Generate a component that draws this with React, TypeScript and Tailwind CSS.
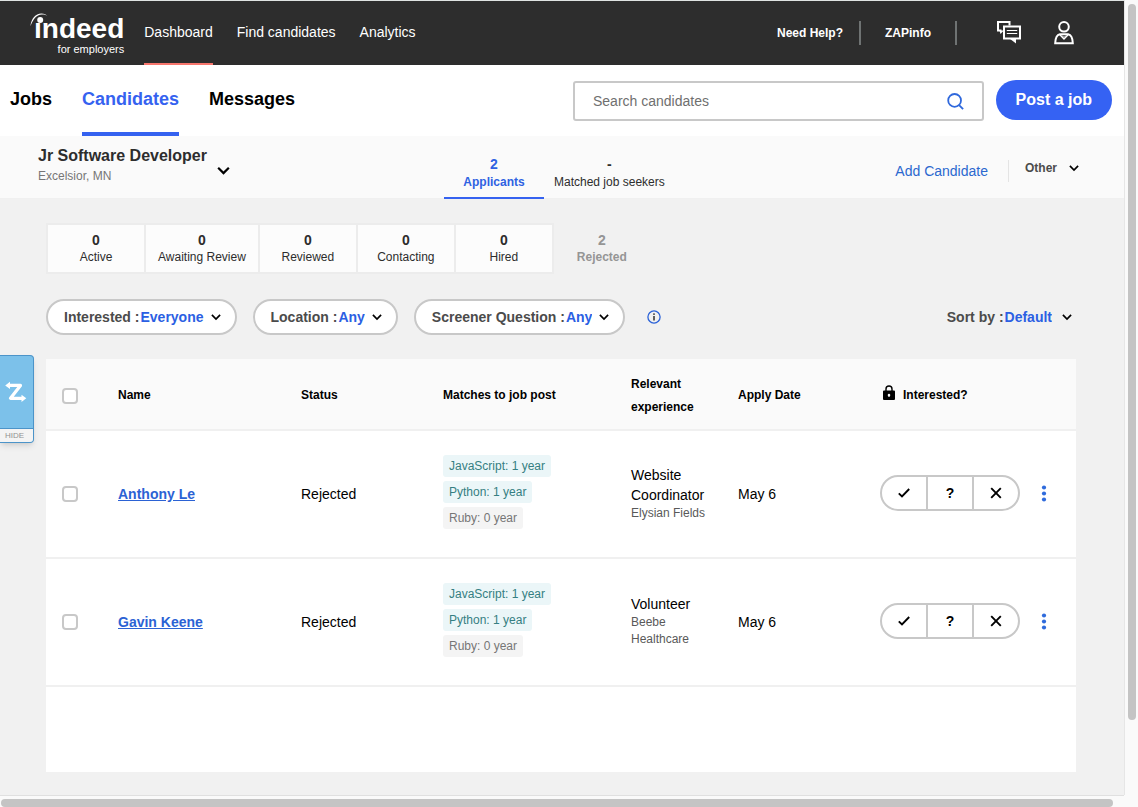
import { useState } from "react";
import clsx from "clsx";

const navLinks = ["Dashboard", "Find candidates", "Analytics"];
const tabs = ["Jobs", "Candidates", "Messages"];

const stages = [
  { count: 0, label: "Active" },
  { count: 0, label: "Awaiting Review" },
  { count: 0, label: "Reviewed" },
  { count: 0, label: "Contacting" },
  { count: 0, label: "Hired" },
];

const filters = [
  { id: "interested", label: "Interested :", options: ["Everyone"] },
  { id: "location", label: "Location :", options: ["Any"] },
  { id: "screener", label: "Screener Question :", options: ["Any"] },
];

const skills = [
  { label: "JavaScript: 1 year", match: true },
  { label: "Python: 1 year", match: true },
  { label: "Ruby: 0 year", match: false },
];

const candidates = [
  { name: "Anthony Le", status: "Rejected", role: "Website Coordinator", company: "Elysian Fields", date: "May 6" },
  { name: "Gavin Keene", status: "Rejected", role: "Volunteer", company: "Beebe Healthcare", date: "May 6" },
];

function Chevron({ className = "h-[10px] w-[10px]" }: { className?: string }) {
  return (
    <svg viewBox="0 0 10 10" className={clsx("shrink-0 text-black", className)} fill="none" stroke="currentColor" strokeWidth="1.7" aria-hidden="true">
      <path d="M.9 2.9 5 7l4.100-4.100" />
    </svg>
  );
}

function Logo() {
  return (
    <a href="#home" aria-label="indeed for employers" className="relative flex flex-col items-end text-white">
      <svg viewBox="0 0 20 14" className="absolute -left-1 top-0 h-[14px] w-[20px]" fill="currentColor" aria-hidden="true">
        <path d="M.4 13.200C1.200 5.500 5.600.4 11.400.4c2.800 0 4.700.8 6 2.600-1.700-1.200-3.500-1.700-5.600-1.500C6.400 1.900 3.200 6.200.4 13.200Z" />
        <circle cx="10.200" cy="7" r="3" />
      </svg>
      <span className="pt-[2px] text-[28px] font-bold leading-[28px]">ındeed</span>
      <span className="text-[11px] leading-[12px]">for employers</span>
    </a>
  );
}

type DropdownProps = { id: string; label: string; options: string[]; wide?: boolean };

function Dropdown({ id, label, options, wide }: DropdownProps) {
  return (
    <div className="flex items-center text-sm font-bold">
      <label htmlFor={id} className="mr-px text-[#4b4b4b]">{label}</label>
      <select id={id} className="field-sizing-content appearance-none bg-transparent text-[#2b5fe3] outline-none">
        {options.map((o) => (
          <option key={o}>{o}</option>
        ))}
      </select>
      <Chevron className={clsx("h-[10px] w-[10px]", wide ? "ml-[10px]" : "ml-[7px]")} />
    </div>
  );
}

function Checkbox({ label }: { label: string }) {
  return (
    <input
      type="checkbox"
      aria-label={label}
      className="block h-4 w-4 appearance-none rounded-[4px] border-2 border-[#c8c8c8] bg-white checked:bg-[#2557d6]"
    />
  );
}

function TopBar() {
  return (
    <header className="flex h-[65px] shrink-0 items-stretch border-t border-[#dfe3e2] bg-[#2d2d2d] pl-[34px] pr-[49px] text-white">
      <div className="mr-5 pt-3">
        <Logo />
      </div>
      <nav className="flex gap-6">
        {navLinks.map((link, i) => (
          <a
            key={link}
            href="#nav"
            className={clsx("flex items-center border-b-2 text-sm", i === 0 ? "border-[#f7766d]" : "border-transparent")}
          >
            {link}
          </a>
        ))}
      </nav>
      <div className="ml-auto flex items-center text-xs font-bold">
        <a href="#help" className="pr-4">Need Help?</a>
        <div className="h-6 w-[2px] bg-[#6f7373]" />
        <a href="#zapinfo" className="px-6">ZAPinfo</a>
        <div className="h-6 w-[2px] bg-[#6f7373]" />
        <button type="button" aria-label="Messages" className="ml-10">
          <svg viewBox="0 0 24 24" className="h-6 w-6" fill="none" stroke="currentColor" strokeWidth="2">
            <path d="M4.500 9.500H1V1h11.500v3.500" />
            <path d="M7 5.500h16v12H7z" />
            <path d="M12.500 17.500h6.500v5z" fill="currentColor" stroke="none" />
            <path d="M2.500 9.500h4.300L3.500 13z" fill="currentColor" stroke="none" />
            <path d="M9.800 9.500h10.400M9.800 12.500h10.400" strokeWidth="1.200" />
          </svg>
        </button>
        <button type="button" aria-label="Account" className="ml-8">
          <svg viewBox="0 0 22 24" className="h-6 w-[22px]" fill="none" stroke="currentColor" strokeWidth="2">
            <circle cx="11" cy="5.800" r="4.800" />
            <path d="M2.200 22.200c.2-4.400 1.600-8.400 4.600-8.900h8.400c3 .5 4.400 4.500 4.600 8.900z" />
            <path d="m6.800 13.700 4.200 4.300 4.200-4.300" strokeWidth="1.300" />
            <path d="m9 14.500 2 2 2-2" strokeWidth="1" />
          </svg>
        </button>
      </div>
    </header>
  );
}

function SubNav() {
  return (
    <div className="flex h-[71px] shrink-0 bg-white pl-[10px] pr-3">
      <nav className="flex gap-[30px]">
        {tabs.map((tab) => (
          <a
            key={tab}
            href="#tab"
            className={clsx(
              "border-b-4 pt-[22px] text-lg font-bold leading-6",
              tab === "Candidates" ? "border-[#3562f0] text-[#3562f0]" : "border-transparent text-black"
            )}
          >
            {tab}
          </a>
        ))}
      </nav>
      <div className="ml-auto flex w-[539px] items-start gap-3 pt-[15px]">
        <form className="mt-px flex h-10 grow items-center rounded-[3px] border-2 border-[#c8c8c8] px-[18px]">
          <input
            type="search"
            aria-label="Search candidates"
            placeholder="Search candidates"
            className="min-w-0 grow bg-transparent text-sm outline-none placeholder:text-[#6f6f6f]"
          />
          <button type="button" aria-label="Search" className="text-[#2f68dc]">
            <svg viewBox="0 0 17 17" className="h-[17px] w-[17px]" fill="none" stroke="currentColor" strokeWidth="1.800">
              <circle cx="7.600" cy="7.400" r="6.400" />
              <path d="m12.100 12.100 4 4" />
            </svg>
          </button>
        </form>
        <button type="button" className="h-10 shrink-0 rounded-full bg-[#3562f3] px-5 text-base font-bold text-white">
          Post a job
        </button>
      </div>
    </div>
  );
}

function JobBar() {
  return (
    <div className="flex h-[63px] shrink-0 border-b border-[#f0f0f0] bg-[#fafafa] pl-[38px] pr-[45px]">
      <button type="button" className="flex w-[406px] items-start gap-[10px] pt-[9px] text-left">
        <span>
          <span className="block text-base font-bold leading-[22px] text-[#2d2d2d]">Jr Software Developer</span>
          <span className="block text-xs leading-[18px] text-[#767676]">Excelsior, MN</span>
        </span>
        <Chevron className="mt-[19px] h-[13px] w-[13px]" />
      </button>
      <div className="-mb-px flex">
        <button type="button" className="min-w-[100px] border-b-2 border-[#3562f0] pt-3 font-bold text-[#2f62e2]">
          <span className="block text-sm leading-[18px]">2</span>
          <span className="block text-xs leading-[18px]">Applicants</span>
        </button>
        <button type="button" className="border-b-2 border-transparent px-[10px] pt-3 text-[#2d2d2d]">
          <span className="block text-sm font-bold leading-[18px]">-</span>
          <span className="block text-xs leading-[18px]">Matched job seekers</span>
        </button>
      </div>
      <div className="ml-auto flex items-center">
        <a href="#add" className="pt-2 text-sm text-[#2b68cf]">Add Candidate</a>
        <div className="ml-5 mr-4 mt-2 h-[22px] w-px bg-[#e4e4e4]" />
        <button type="button" className="flex items-center gap-3 pt-px text-xs font-bold text-[#4b4b4b]">
          Other
          <Chevron />
        </button>
      </div>
    </div>
  );
}

function InterestButtons() {
  const cell = "flex w-[46px] shrink-0 items-center justify-center last:w-11";
  return (
    <div className="flex h-9 w-[140px] divide-x-2 divide-[#c8c8c8] rounded-full border-2 border-[#c8c8c8] bg-white text-black">
      <button type="button" aria-label="Yes" className={cell}>
        <svg viewBox="0 0 12 12" className="h-3 w-3" fill="none" stroke="currentColor" strokeWidth="1.900">
          <path d="m.8 6.300 3.200 3.200 7.200-7.500" />
        </svg>
      </button>
      <button type="button" aria-label="Maybe" className={clsx(cell, "text-sm font-bold")}>?</button>
      <button type="button" aria-label="No" className={cell}>
        <svg viewBox="0 0 12 12" className="h-3 w-3" fill="none" stroke="currentColor" strokeWidth="1.900">
          <path d="m1.200 1.200 9.600 9.600M10.800 1.200l-9.600 9.600" />
        </svg>
      </button>
    </div>
  );
}

function CandidateTable() {
  return (
    <div className="h-[413px] bg-white">
      <table className="w-full table-fixed text-left">
        <colgroup>
          <col className="w-[72px]" />
          <col />
          <col className="w-[142px]" />
          <col className="w-[188px]" />
          <col className="w-[107px]" />
          <col className="w-[142px]" />
          <col className="w-[196px]" />
        </colgroup>
        <thead>
          <tr className="h-[71px] border-b-2 border-[#f0f0f0] bg-[#fafafa] text-xs leading-[23px] text-black [&>th]:pt-[3px]">
            <th className="pl-4"><Checkbox label="Select all" /></th>
            <th>Name</th>
            <th>Status</th>
            <th>Matches to job post</th>
            <th className="pr-4">Relevant experience</th>
            <th>Apply Date</th>
            <th>
              <span className="flex items-center gap-2 pl-[3px]">
                <svg viewBox="0 0 12 15" className="mb-[7px] h-[15px] w-3" fill="none" aria-hidden="true">
                  <path d="M3 6V4a3 3 0 0 1 6 0v2" stroke="currentColor" strokeWidth="1.400" />
                  <path fill="currentColor" fillRule="evenodd" d="M1 5.500h10a1 1 0 0 1 1 1v7.500a1 1 0 0 1-1 1H1a1 1 0 0 1-1-1V6.500a1 1 0 0 1 1-1Zm5 3.200a1.400 1.400 0 0 0-.6 2.600V12h1.200v-.7A1.400 1.400 0 0 0 6 8.700Z" />
                </svg>
                Interested?
              </span>
            </th>
          </tr>
        </thead>
        <tbody>
          {candidates.map((c) => (
            <tr key={c.name} className="h-32 border-b-2 border-[#f0f0f0] text-sm text-black">
              <td className="pl-4"><Checkbox label={`Select ${c.name}`} /></td>
              <td>
                <a href="#candidate" className="font-bold text-[#2b62d4] underline">{c.name}</a>
              </td>
              <td>{c.status}</td>
              <td>
                <ul className="flex flex-col items-start text-xs leading-[22px]">
                  {skills.map((s) => (
                    <li
                      key={s.label}
                      className={clsx("mb-1 rounded-[3px] px-[6px]", s.match ? "bg-[#ebf6f8] text-[#357f82]" : "bg-[#f4f4f4] text-[#767676]")}
                    >
                      {s.label}
                    </li>
                  ))}
                </ul>
              </td>
              <td className="pb-[2px] pr-4">
                <div className="leading-5">{c.role}</div>
                <div className="text-xs leading-[17px] text-[#595959]">{c.company}</div>
              </td>
              <td>{c.date}</td>
              <td className="pb-[2px]">
                <div className="flex items-center gap-[21px]">
                  <InterestButtons />
                  <button type="button" aria-label="More actions" className="text-[#2f6bdc]">
                    <svg viewBox="0 0 6 17" className="h-[17px] w-[6px]" fill="currentColor">
                      <circle cx="3" cy="2.500" r="2.100" />
                      <circle cx="3" cy="8.500" r="2.100" />
                      <circle cx="3" cy="14.500" r="2.100" />
                    </svg>
                  </button>
                </div>
              </td>
            </tr>
          ))}
        </tbody>
      </table>
    </div>
  );
}

function SideWidget({ onHide }: { onHide: () => void }) {
  return (
    <aside className="absolute left-0 top-[355px] flex h-[88px] w-[34px] flex-col overflow-hidden rounded-r-[4px] border border-l-0 border-[#4c94c9] bg-[#7cc1ea] shadow-md">
      <button type="button" aria-label="Open ZAPinfo" className="flex grow items-center pl-[5px] text-white">
        <svg viewBox="0 0 22 22" className="h-[22px] w-[22px]" fill="none" stroke="currentColor" strokeWidth="3.200" strokeLinejoin="round">
          <path d="M4 4.400h11.500L5.500 17.300h12" />
          <path d="M5 .8v7.200L.2 4.400zM16.500 13.700v7.200l4.800-3.600z" fill="currentColor" stroke="none" />
        </svg>
      </button>
      <button type="button" onClick={onHide} className="h-[14px] border-t border-[#4c94c9] bg-[#f4f4f4] pr-1 text-[8px] leading-[12px] text-[#929292]">
        HIDE
      </button>
    </aside>
  );
}

export default function App() {
  const [widgetOpen, setWidgetOpen] = useState(true);

  return (
    <div className="relative grid h-screen grid-cols-[1fr_14px] grid-rows-[1fr_12px] bg-[#fafafa] font-['Liberation_Sans',Arial,sans-serif]">
      <div className="flex min-w-0 flex-col overflow-hidden bg-[#f1f1f1]">
        <TopBar />
        <SubNav />
        <JobBar />

        <main className="pl-[46px] pr-12 pt-6">
          <div className="flex items-start text-center">
            <div className="flex border-2 border-r-0 border-[#ececec]">
              {stages.map((s) => (
                <button key={s.label} type="button" className="h-[47px] min-w-[98px] border-r-2 border-[#ececec] bg-[#fcfcfc] px-3 text-[#2d2d2d]">
                  <span className="block text-sm font-bold leading-[17px]">{s.count}</span>
                  <span className="block text-xs leading-[17px]">{s.label}</span>
                </button>
              ))}
            </div>
            <button type="button" className="h-[51px] min-w-[96px] font-bold text-[#959595]">
              <span className="block text-sm leading-[17px]">2</span>
              <span className="block text-xs leading-[17px]">Rejected</span>
            </button>
          </div>

          <div className="mt-[25px] flex items-center">
            <div className="flex gap-4">
              {filters.map((f) => (
                <div key={f.id} className="flex h-9 items-center rounded-full border-2 border-[#c8c8c8] bg-white pl-4 pr-[14px]">
                  <Dropdown {...f} />
                </div>
              ))}
            </div>
            <button type="button" aria-label="Filter information" className="ml-[22px]">
              <svg viewBox="0 0 14 14" className="h-[14px] w-[14px]" fill="none">
                <circle cx="7" cy="7" r="6.100" stroke="#2b62d8" strokeWidth="1.300" />
                <path d="M7 6v4.400" stroke="#2d2d2d" strokeWidth="1.500" />
                <circle cx="7" cy="4.100" r=".9" fill="#2d2d2d" />
              </svg>
            </button>
            <div className="ml-auto pr-1">
              <Dropdown id="sort" label="Sort by :" options={["Default"]} wide />
            </div>
          </div>

          <div className="mt-6">
            <CandidateTable />
          </div>
        </main>
      </div>

      <div className="border-l border-[#e6e6e6] py-1 pl-[3px]">
        <div className="h-[91%] w-2 rounded-full bg-[#c4c4c4]" />
      </div>
      <div className="border-t border-[#e0e0e0] pl-px pt-[3px]">
        <div className="h-2 w-[99%] rounded-full bg-[#c4c4c4]" />
      </div>

      {widgetOpen && <SideWidget onHide={() => setWidgetOpen(false)} />}
    </div>
  );
}
